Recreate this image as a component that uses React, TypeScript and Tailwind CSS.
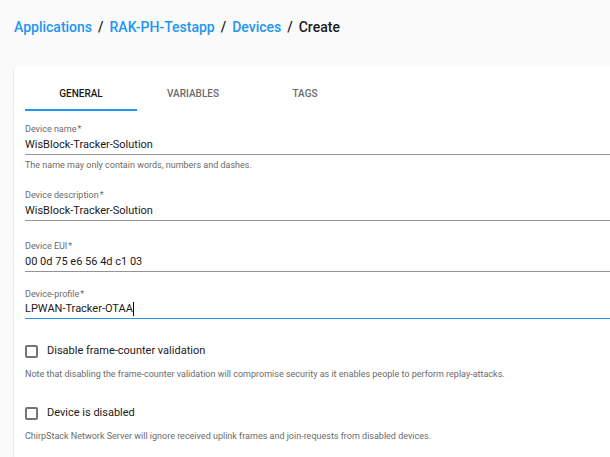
import { useId, useState, type ReactNode } from "react";

const crumbs = ["Applications", "RAK-PH-Testapp", "Devices"];
const tabs = ["GENERAL", "VARIABLES", "TAGS"];

function Hint({ children }: { children: ReactNode }) {
  return <p className="text-[9px] leading-[10px] text-[#6b6b6b]">{children}</p>;
}

function FieldLabel({ htmlFor, children }: { htmlFor: string; children: ReactNode }) {
  return (
    <label htmlFor={htmlFor} className="flex gap-px text-[9px] leading-[10px] text-[#6b6b6b]">
      {children}
      <span>*</span>
    </label>
  );
}

function Field({ label, value, hint }: { label: string; value: string; hint?: string }) {
  const id = useId();
  return (
    <div className="flex flex-col">
      <FieldLabel htmlFor={id}>{label}</FieldLabel>
      <input
        id={id}
        type="text"
        defaultValue={value}
        className="h-[21px] w-full border-b border-[#949494] bg-transparent text-[11px] outline-none"
      />
      {hint && (
        <div className="mt-[5px]">
          <Hint>{hint}</Hint>
        </div>
      )}
    </div>
  );
}

function ProfileField() {
  const id = useId();
  return (
    <div className="flex flex-col">
      <FieldLabel htmlFor={id}>Device-profile</FieldLabel>
      <div className="flex h-5 items-center border-b border-[#2196f3]">
        <input
          id={id}
          type="text"
          defaultValue="LPWAN-Tracker-OTAA"
          className="h-full bg-transparent text-[11px] outline-none [field-sizing:content]"
        />
        <span aria-hidden="true" className="h-3.5 w-px bg-black" />
      </div>
    </div>
  );
}

function CheckRow({ label, hint }: { label: string; hint: string }) {
  return (
    <div className="flex flex-col gap-2.5">
      <label className="flex items-center gap-[9px] text-[11px] leading-4">
        <input
          type="checkbox"
          className="size-[13px] appearance-none rounded-[2px] border-2 border-[#757575] bg-white checked:bg-[#2196f3]"
        />
        {label}
      </label>
      <Hint>{hint}</Hint>
    </div>
  );
}

export default function App() {
  const [active, setActive] = useState("GENERAL");
  return (
    <main className="flex min-h-screen flex-col bg-[#fafafa] pl-3.5 font-['Roboto',sans-serif] text-[#1a1a1a]">
      <nav aria-label="Breadcrumb" className="pt-[17px] pb-[29px]">
        <ol className="flex gap-1.5 text-[14px] leading-5 font-medium">
          {crumbs.map((name) => (
            <li key={name} className="flex gap-1.5">
              <a href="#" className="text-[#2196f3]">
                {name}
              </a>
              <span>/</span>
            </li>
          ))}
          <li aria-current="page">Create</li>
        </ol>
      </nav>

      <section className="flex-1 rounded-tl-[3px] bg-white pt-[11px] pl-[11px] shadow-[0_1px_2px_rgba(0,0,0,0.2)]">
        <div role="tablist" className="flex">
          {tabs.map((name) => (
            <button
              key={name}
              type="button"
              role="tab"
              aria-selected={active === name}
              onClick={() => setActive(name)}
              className={`h-[34px] w-28 border-b-2 text-[10px] font-medium ${
                active === name ? "border-[#2196f3] text-[#1a1a1a]" : "border-transparent text-[#6b6b6b]"
              }`}
            >
              {name}
            </button>
          ))}
        </div>

        <form className="flex flex-col pt-[13px]">
          <div className="flex flex-col gap-5">
            <Field
              label="Device name"
              value="WisBlock-Tracker-Solution"
              hint="The name may only contain words, numbers and dashes."
            />
            <Field label="Device description" value="WisBlock-Tracker-Solution" />
            <Field label="Device EUI" value="00 0d 75 e6 56 4d c1 03" />
          </div>
          <div className="pt-[17px]">
            <ProfileField />
          </div>
          <div className="flex flex-col gap-[26px] pt-6">
            <CheckRow
              label="Disable frame-counter validation"
              hint="Note that disabling the frame-counter validation will compromise security as it enables people to perform replay-attacks."
            />
            <CheckRow
              label="Device is disabled"
              hint="ChirpStack Network Server will ignore received uplink frames and join-requests from disabled devices."
            />
          </div>
        </form>
      </section>
    </main>
  );
}
